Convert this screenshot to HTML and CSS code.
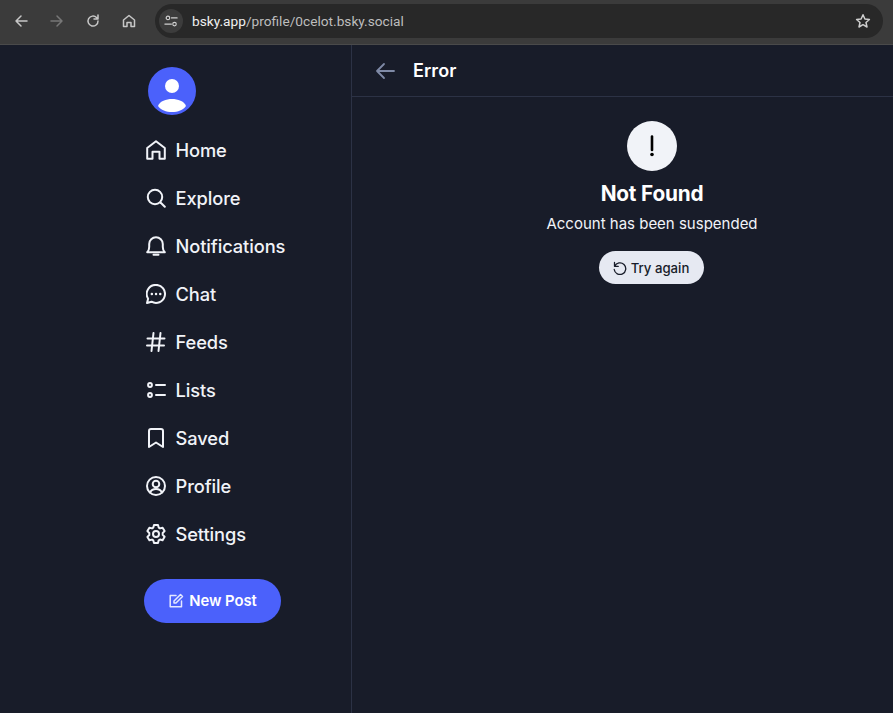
FILE: index.html
```html
<!DOCTYPE html>
<html lang="en">
<head>
<meta charset="utf-8">
<title>bsky.app</title>
<link rel="stylesheet" href="styles.css">
</head>
<body>
<header class="chrome">
  <button class="tool"><svg viewBox="0 0 16 16" class="ti"><path d="M14 8H3M8 3 3 8l5 5"/></svg></button>
  <button class="tool dim"><svg viewBox="0 0 16 16" class="ti"><path d="M2 8h11M8 3l5 5-5 5"/></svg></button>
  <button class="tool"><svg viewBox="0 0 16 16" class="ti"><path d="M13 8a5 5 0 1 1-1.500-3.500L13 6M13 2v4H9"/></svg></button>
  <button class="tool"><svg viewBox="0 0 16 16" class="ti"><path d="M2.500 7 8 2.500 13.500 7v6.500h-3.500V9.500H6v4H2.500z"/></svg></button>
  <div class="omnibox">
    <span class="tune"><svg viewBox="0 0 16 16" class="ti small"><circle cx="4.500" cy="4.500" r="2"/><path d="M8.500 4.500H15M1 11.500h7.500"/><circle cx="12" cy="11.500" r="2"/></svg></span>
    <span class="url"><span class="host">bsky.app</span>/profile/0celot.bsky.social</span>
    <svg viewBox="0 0 16 16" class="ti star"><path d="M8 1.800 9.900 6l4.500.5-3.400 3 1 4.500L8 11.700 4 14l1-4.500-3.400-3L6.100 6z"/></svg>
  </div>
</header>
<div class="app">
  <nav class="side">
    <div class="avatar"><svg viewBox="0 0 48 48" class="avatar-svg"><circle cx="24" cy="24" r="24" fill="#4b61fb"/><circle cx="24" cy="19" r="7" fill="#fff"/><path d="M10 39c2-5 8-7 14-7s12 2 14 7c-3 4-8 6-14 6s-11-2-14-6z" fill="#fff"/></svg></div>
    <a class="item"><svg viewBox="0 0 20 20" class="ni"><path d="M1.200 8 10 1.200 18.800 8v10.800h-5.300v-7h-7v7H1.200z"/></svg><span>Home</span></a>
    <a class="item"><svg viewBox="0 0 20 20" class="ni"><circle cx="9" cy="9" r="7.200"/><path d="m14.500 14.500 4.300 4.300"/></svg><span>Explore</span></a>
    <a class="item"><svg viewBox="0 0 20 20" class="ni"><path d="M1.200 16.200c1.600-1.600 2-3 2-5.200V8a6.800 6.800 0 0 1 13.600 0v3c0 2.200.4 3.600 2 5.200zM7.500 18.800h5"/></svg><span>Notifications</span></a>
    <a class="item"><svg viewBox="0 0 20 20" class="ni"><path d="M10 .9a9 9 0 1 1-4.500 16.800L1 19l1.100-4.300A9 9 0 0 1 10 .9z"/><path class="dots" d="M5.800 10h.1M10 10h.1M14.200 10h.1"/></svg><span>Chat</span></a>
    <a class="item"><svg viewBox="0 0 20 20" class="ni"><path d="M1.500 6.500h17M1 13.500h17M7.500 1 5.500 19M14.500 1l-2 18"/></svg><span>Feeds</span></a>
    <a class="item"><svg viewBox="0 0 20 20" class="ni"><circle cx="4" cy="5" r="1.900"/><circle cx="4" cy="15" r="1.900"/><path d="M10 5h9M10 15h9"/></svg><span>Lists</span></a>
    <a class="item"><svg viewBox="0 0 20 20" class="ni"><path d="M3 3a2 2 0 0 1 2-2h10a2 2 0 0 1 2 2v16l-7-4.500L3 19z"/></svg><span>Saved</span></a>
    <a class="item"><svg viewBox="0 0 20 20" class="ni"><circle cx="10" cy="10" r="9"/><circle cx="10" cy="8" r="3.300"/><path d="M4.200 16.500c1-2.500 3.200-3.500 5.800-3.500s4.800 1 5.800 3.500"/></svg><span>Profile</span></a>
    <a class="item"><svg viewBox="0 0 20 20" class="ni"><circle cx="10" cy="10" r="3"/><path d="m8 1h4l.7 2.600 1.300.8 2.600-.7 2 3.400-1.900 1.900v1.900l1.900 1.900-2 3.400-2.600-.7-1.300.8L12 19H8l-.7-2.600-1.300-.8-2.600.7-2-3.400L3.300 11V9L1.400 7.100l2-3.400 2.600.7 1.300-.8z"/></svg><span>Settings</span></a>
    <button class="post"><svg viewBox="0 0 16 16" class="pi"><path d="M8 2.500H2.200v11.300h11.300V8"/><path d="M6 8 12.500 1.500l2 2L8 10H6z"/></svg>New Post</button>
  </nav>
  <main class="content">
    <div class="bar">
      <svg viewBox="0 0 20 20" class="back"><path d="M19 10H2M9 3 2 10l7 7"/></svg>
      <h1>Error</h1>
    </div>
    <section class="error">
      <div class="bang"><svg viewBox="0 0 50 50" class="bang-svg"><path d="M25 15.500v13.500"/><circle cx="25" cy="33.500" r="1.800"/></svg></div>
      <h2>Not Found</h2>
      <p>Account has been suspended</p>
      <button class="retry"><svg viewBox="0 0 14 14" class="ri"><path d="M1.500 1.500v3.800h3.800M1.700 5.200A5.800 5.800 0 1 1 1.200 8.500"/></svg>Try again</button>
    </section>
  </main>
</div>
</body>
</html>
```
FILE: styles.css
```css
* { box-sizing: border-box; }
html, body { margin: 0; height: 100%; }
body {
  background: #181c29;
  color: #f1f3f8;
  font-family: Inter, "Liberation Sans", sans-serif;
  overflow: hidden;
  display: flex;
  flex-direction: column;
}
button { font-family: inherit; border: 0; padding: 0; }
svg { display: block; fill: none; stroke-linecap: round; stroke-linejoin: round; }

.chrome {
  height: 45px;
  flex: none;
  background: #3b3b3b;
  border-bottom: 1px solid #4a4a4a;
  display: flex;
  align-items: center;
  padding: 0 10px 3px 3px;
  gap: 0;
}
.tool {
  width: 36px;
  height: 36px;
  background: none;
  display: flex;
  align-items: center;
  justify-content: center;
  color: #c7c7c7;
}
.tool.dim { color: #777; }
.ti { width: 16px; height: 16px; stroke: currentColor; stroke-width: 1.500; }
.omnibox {
  margin-left: 8px;
  flex: 1;
  height: 34px;
  border-radius: 17px;
  background: #282828;
  display: flex;
  align-items: center;
  padding: 0 4px;
  margin-top: 1px;
}
.tune {
  width: 24px;
  height: 24px;
  border-radius: 50%;
  background: #3c3c3c;
  color: #d0d0d0;
  display: flex;
  align-items: center;
  justify-content: center;
}
.ti.small { width: 14px; height: 14px; stroke-width: 1.300; }
.url {
  margin-left: 9px;
  flex: 1;
  font: 13.700px Roboto, "Liberation Sans", sans-serif;
  color: #bdbdbd;
}
.host { color: #f0f0f0; }
.star { color: #cfcfcf; margin-right: 8px; }

.app { flex: 1; display: flex; min-height: 0; }
.side {
  width: 352px;
  flex: none;
  border-right: 1px solid #2c3245;
  padding: 22px 0 0 144px;
  display: flex;
  flex-direction: column;
  align-items: flex-start;
}
.avatar { margin-left: 4px; margin-bottom: 11px; }
.avatar-svg { width: 48px; height: 48px; }
.item {
  height: 48px;
  display: flex;
  align-items: center;
  font-size: 18.300px;
  font-weight: 500;
  color: #f1f3f8;
  letter-spacing: -0.100px;
}
.ni {
  width: 20px;
  height: 20px;
  margin: 0 9.500px 0 2px;
  stroke: #f1f3f8;
  stroke-width: 2;
}
.dots { stroke-width: 2.400; }
.post {
  margin-top: 21px;
  width: 137px;
  height: 44px;
  border-radius: 22px;
  background: #4b61fb;
  color: #fff;
  font-size: 14.800px;
  font-weight: 600;
  display: flex;
  align-items: center;
  justify-content: center;
  gap: 5px;
}
.pi { width: 16px; height: 16px; stroke: #e4e8ff; stroke-width: 1.500; }

.content { flex: 1; min-width: 0; }
.bar {
  height: 52px;
  border-bottom: 1px solid #2c3245;
  display: flex;
  align-items: center;
  padding-left: 23px;
  gap: 18px;
}
.back { width: 20px; height: 20px; stroke: #7f8aa6; stroke-width: 1.800; }
h1 { margin: 0; font-size: 18px; letter-spacing: 0.060px; font-weight: 600; color: #fff; }
.error {
  display: flex;
  flex-direction: column;
  align-items: center;
  padding: 24px 0 0 59px;
}
.bang {
  width: 50px;
  height: 50px;
  border-radius: 50%;
  background: #f1f3f8;
}
.bang-svg { width: 50px; height: 50px; stroke: #000; stroke-width: 2.600; }
.bang-svg circle { fill: #000; stroke: none; }
h2 { margin: 10px 0 0; font-size: 20.800px; line-height: 26px; font-weight: 700; color: #fff; letter-spacing: -0.200px; }
p { margin: 7px 0 0; font-size: 15px; line-height: 20px; color: #f1f3f8; }
.retry {
  margin: 17px 2px 0 0;
  width: 105px;
  height: 33px;
  border-radius: 17px;
  background: #e6e9f2;
  color: #181c29;
  font-size: 13.200px;
  font-weight: 500;
  display: flex;
  align-items: center;
  justify-content: center;
  gap: 4px;
}
.ri { width: 14px; height: 14px; stroke: #181c29; stroke-width: 1.300; }
```
